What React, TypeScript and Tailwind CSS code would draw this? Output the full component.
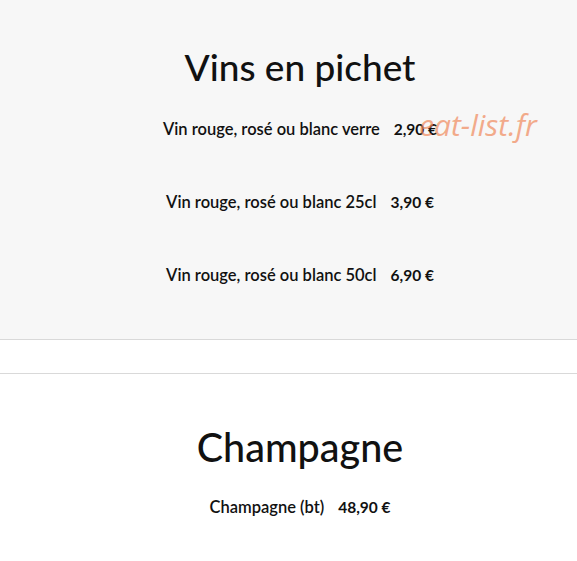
import React from "react";

const font = { fontFamily: "Lato, 'Noto Sans', sans-serif" };

function Item({ name, price }: { name: string; price: string }) {
  return (
    <div className="flex justify-center items-center gap-[14px] text-[16.5px] leading-[22px] font-semibold text-[#111]">
      <span>{name}</span>
      <span className="text-[15.5px] font-bold">{price}</span>
    </div>
  );
}

export default function App() {
  return (
    <div className="w-[577px] h-[561px] bg-white overflow-hidden relative" style={font}>
      <section className="bg-[#f7f7f7] h-[340px] border-b border-[#d9d9d9] flex flex-col items-center pt-[43px] pl-[23px]">
        <h1 className="text-[37px] font-medium text-[#111] leading-[48px]">Vins en pichet</h1>
        <div className="flex flex-col gap-[51px] mt-[27px]">
          <Item name="Vin rouge, rosé ou blanc verre" price="2,90 €" />
          <Item name="Vin rouge, rosé ou blanc 25cl" price="3,90 €" />
          <Item name="Vin rouge, rosé ou blanc 50cl" price="6,90 €" />
        </div>
      </section>
      <div className="h-[34px] border-b border-[#d9d9d9]" />
      <section className="flex flex-col items-center pt-[48px] pl-[23px]">
        <h2 className="text-[39.5px] font-medium text-[#111] leading-[50px]">Champagne</h2>
        <div className="mt-[24px]">
          <Item name="Champagne (bt)" price="48,90 €" />
        </div>
      </section>
      <div className="absolute left-[419px] top-[102px] text-[30px] italic text-[#f08a5d] opacity-70" style={{ fontFamily: "'Open Sans', sans-serif" }}>
        eat-list.fr
      </div>
    </div>
  );
}
